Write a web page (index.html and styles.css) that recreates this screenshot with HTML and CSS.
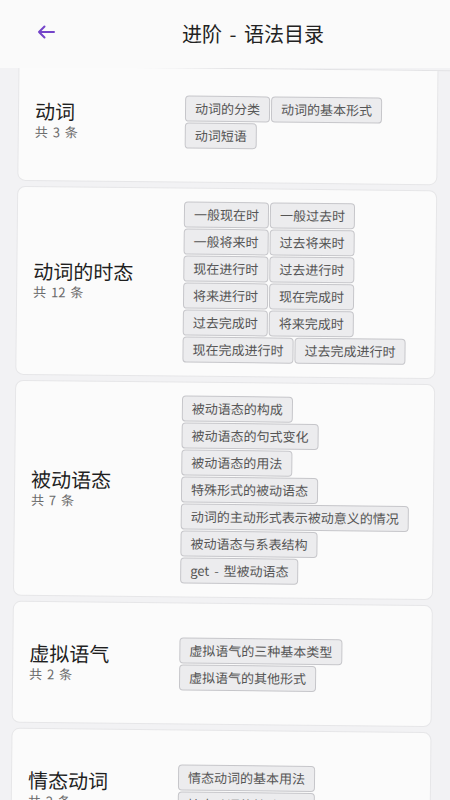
FILE: index.html
```html
<!DOCTYPE html>
<html lang="zh-CN">
<head>
<meta charset="utf-8">
<title>进阶 - 语法目录</title>
<link rel="stylesheet" href="styles.css">
</head>
<body>
<div class="app">
  <header class="topbar">
    <div class="back">
      <svg class="back-icon" width="18" height="14" viewBox="0 0 18 14" aria-hidden="true">
        <path d="M17 7H2M7.5 1.5L2 7l5.5 5.5" fill="none" stroke="#7444c9" stroke-width="2" stroke-linecap="round" stroke-linejoin="round"/>
      </svg>
    </div>
    <h1 class="title">进阶 - 语法目录</h1>
  </header>
  <main class="list">
    <div class="list-inner">
      <section class="card card-first">
        <div class="card-head">
          <div class="card-title">动词</div>
          <div class="card-count">共 3 条</div>
        </div>
        <div class="chips">
          <span class="chip">动词的分类</span>
          <span class="chip">动词的基本形式</span>
          <span class="chip">动词短语</span>
        </div>
      </section>
      <section class="card">
        <div class="card-head">
          <div class="card-title">动词的时态</div>
          <div class="card-count">共 12 条</div>
        </div>
        <div class="chips">
          <span class="chip">一般现在时</span>
          <span class="chip">一般过去时</span>
          <span class="chip">一般将来时</span>
          <span class="chip">过去将来时</span>
          <span class="chip">现在进行时</span>
          <span class="chip">过去进行时</span>
          <span class="chip">将来进行时</span>
          <span class="chip">现在完成时</span>
          <span class="chip">过去完成时</span>
          <span class="chip">将来完成时</span>
          <span class="chip">现在完成进行时</span>
          <span class="chip">过去完成进行时</span>
        </div>
      </section>
      <section class="card">
        <div class="card-head">
          <div class="card-title">被动语态</div>
          <div class="card-count">共 7 条</div>
        </div>
        <div class="chips">
          <span class="chip">被动语态的构成</span>
          <span class="chip">被动语态的句式变化</span>
          <span class="chip">被动语态的用法</span>
          <span class="chip">特殊形式的被动语态</span>
          <span class="chip">动词的主动形式表示被动意义的情况</span>
          <span class="chip">被动语态与系表结构</span>
          <span class="chip">get - 型被动语态</span>
        </div>
      </section>
      <section class="card">
        <div class="card-head">
          <div class="card-title">虚拟语气</div>
          <div class="card-count">共 2 条</div>
        </div>
        <div class="chips">
          <span class="chip">虚拟语气的三种基本类型</span>
          <span class="chip">虚拟语气的其他形式</span>
        </div>
      </section>
      <section class="card">
        <div class="card-head">
          <div class="card-title">情态动词</div>
          <div class="card-count">共 2 条</div>
        </div>
        <div class="chips">
          <span class="chip">情态动词的基本用法</span>
          <span class="chip">情态动词的特殊用法</span>
        </div>
      </section>
    </div>
  </main>
</div>
</body>
</html>
```
FILE: styles.css
```css
* { box-sizing: border-box; }

html, body {
  margin: 0;
  padding: 0;
}

body {
  background: #fafafa;
  font-family: "Noto Sans CJK SC", "Noto Sans", sans-serif;
  color: #1f1f1f;
}

.app {
  width: 450px;
  height: 800px;
  overflow: hidden;
  display: flex;
  flex-direction: column;
}

.topbar {
  height: 68px;
  flex-shrink: 0;
  display: flex;
  align-items: center;
  background: #fafafa;
}

.back {
  width: 56px;
  display: flex;
  justify-content: flex-end;
  padding-right: 1px;
  margin-top: -4px;
}

.back-icon {
  display: block;
}

.title {
  flex: 1;
  margin: 0;
  text-align: center;
  font-size: 20px;
  font-weight: 400;
  line-height: 28px;
  word-spacing: 3px;
  color: #222;
}

.list {
  flex: 1;
  background: #f2f2f4;
  overflow: hidden;
}

.list-inner {
  height: 780px;
  overflow: hidden;
  background: #f2f2f4;
  border-top: 1px solid #e3e3e5;
  padding: 0 15px;
  display: flex;
  flex-direction: column;
  gap: 5px;
  transform: rotate(0.6deg);
  transform-origin: 225px 332px;
}

.card {
  flex-shrink: 0;
  min-height: 122px;
  background: #fbfbfb;
  border: 1px solid #e6e6e8;
  border-radius: 8px;
  padding: 13px 14px 13px 16px;
  display: flex;
  align-items: center;
}

.card-first {
  margin-top: -8px;
}

.card-head {
  width: 150px;
  flex-shrink: 0;
  margin-top: -2px;
}

.card-title {
  font-size: 20px;
  line-height: 24px;
  color: #1f1f1f;
}

.card-count {
  font-size: 13px;
  line-height: 17px;
  word-spacing: 2px;
  color: #6a6a6a;
}

.chips {
  width: 238px;
  display: flex;
  flex-wrap: wrap;
  gap: 1px;
}

.chip {
  height: 26px;
  padding: 0 9px;
  border: 1px solid #c6c6ca;
  border-radius: 4px;
  background: #ececee;
  font-size: 13px;
  line-height: 24px;
  color: #555;
  white-space: nowrap;
  word-spacing: 2px;
}
```
